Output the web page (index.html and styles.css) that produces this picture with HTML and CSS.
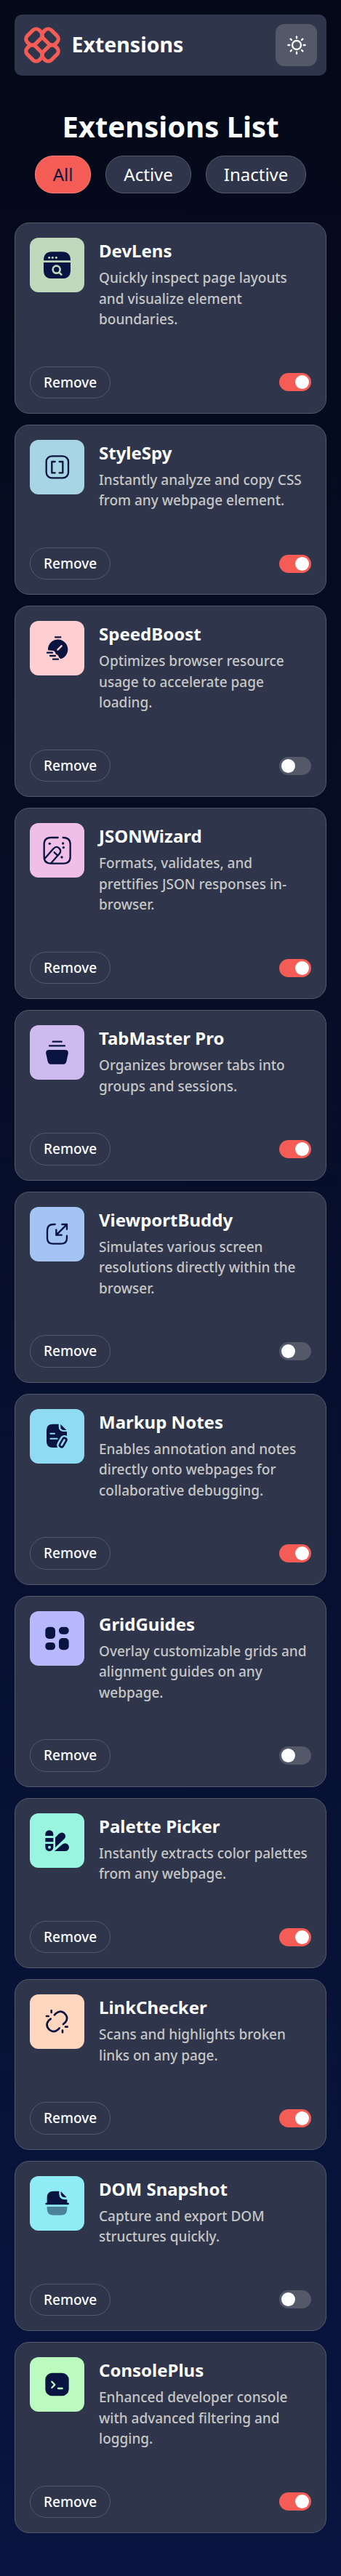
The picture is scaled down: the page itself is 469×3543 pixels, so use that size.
FILE: index.html
```html
<!DOCTYPE html>
<html lang="en">
<head>
<meta charset="utf-8">
<title>Extensions</title>
<link rel="stylesheet" href="styles.css">
</head>
<body>
<header class="header">
  <div class="brand">
    <svg class="brand-mark" viewBox="-75 -75 150 150" fill="none" stroke="#f45c55" stroke-width="16">
      <rect x="-35" y="-23.500" width="70" height="47" rx="19" transform="translate(-33 -33) rotate(-45)"/>
      <rect x="-35" y="-23.500" width="70" height="47" rx="19" transform="translate(33 -33) rotate(45)"/>
      <rect x="-35" y="-23.500" width="70" height="47" rx="19" transform="translate(-33 33) rotate(45)"/>
      <rect x="-35" y="-23.500" width="70" height="47" rx="19" transform="translate(33 33) rotate(-45)"/>
    </svg>
    <span class="brand-name">Extensions</span>
  </div>
  <button class="theme" aria-label="Toggle theme">
    <svg viewBox="-39 -39 78 78" fill="none" stroke="#fbfdfe" stroke-width="7" stroke-linecap="round"><circle r="18"/><path d="M0-35V-29M0 29V35M-35 0H-29M29 0H35M-25-25L-21-21M21 21L25 25M-25 25L-21 21M21-21L25-25"/></svg>
  </button>
</header>
<main>
  <h1>Extensions List</h1>
  <nav class="filters">
    <button class="filter selected">All</button>
    <button class="filter">Active</button>
    <button class="filter">Inactive</button>
  </nav>
  <section class="list">
    <article class="card">
      <div class="info">
        <svg class="tile lens" viewBox="0 0 225 225"><path fill="#091540" d="M57 94Q57 58 91 58H134Q168 58 168 94ZM57 102H168V134Q168 168 134 168H91Q57 168 57 134Z"/><g fill="#c0d8bc"><circle cx="80" cy="82" r="4.500"/><circle cx="94" cy="82" r="4.500"/><circle cx="109" cy="82" r="4.500"/></g><g fill="none" stroke="#c0d8bc" stroke-width="8" stroke-linecap="round"><circle cx="110" cy="131" r="15"/><path d="M121 143L130 152"/></g></svg>
        <div class="copy"><h2>DevLens</h2><p>Quickly inspect page layouts and visualize element boundaries.</p></div>
      </div>
      <div class="actions"><button class="remove">Remove</button><span class="toggle on"></span></div>
    </article>
    <article class="card">
      <div class="info">
        <svg class="tile spy" viewBox="0 0 225 225"><g class="line"><rect x="68" y="67" width="91" height="90" rx="23"/><path d="M104 90H91V136H104M122 90H136V136H122"/></g></svg>
        <div class="copy"><h2>StyleSpy</h2><p>Instantly analyze and copy CSS from any webpage element.</p></div>
      </div>
      <div class="actions"><button class="remove">Remove</button><span class="toggle on"></span></div>
    </article>
    <article class="card">
      <div class="info">
        <svg class="tile speed" viewBox="0 0 225 225"><path fill="#091540" d="M75 121A41 41 0 1 1 128 157Q120 153 119 147Q116 138 108 137Q105 126 98 123Z"/><path class="line" d="M105 67H127M72 131H93M84 144H105M96 158H117"/><path d="M115 119L131 103" fill="none" stroke="#ffced1" stroke-width="7" stroke-linecap="round"/></svg>
        <div class="copy"><h2>SpeedBoost</h2><p>Optimizes browser resource usage to accelerate page loading.</p></div>
      </div>
      <div class="actions"><button class="remove">Remove</button><span class="toggle"></span></div>
    </article>
    <article class="card">
      <div class="info">
        <svg class="tile json" viewBox="0 0 225 225"><path class="line" d="M116 60H87Q59 60 59 88V139Q59 167 87 167H139Q167 167 167 139V88Q167 60 137 60M64 144L98 105Q109 93 121 104Q132 115 122 127L88 165M101 121L114 133"/><g fill="#091540"><circle cx="82" cy="85" r="5"/><circle cx="137" cy="84" r="5"/><circle cx="139" cy="101" r="5"/><circle cx="132" cy="141" r="5"/></g></svg>
        <div class="copy"><h2>JSONWizard</h2><p>Formats, validates, and prettifies JSON responses in-browser.</p></div>
      </div>
      <div class="actions"><button class="remove">Remove</button><span class="toggle on"></span></div>
    </article>
    <article class="card">
      <div class="info">
        <svg class="tile tabs" viewBox="0 0 225 225"><path class="line" d="M95 68H131M81 85H144"/><path fill="#091540" d="M80 102H145Q161 102 158 118L151 150Q148 161 139 161H86Q77 161 74 150L67 118Q64 102 80 102Z"/></svg>
        <div class="copy"><h2>TabMaster Pro</h2><p>Organizes browser tabs into groups and sessions.</p></div>
      </div>
      <div class="actions"><button class="remove">Remove</button><span class="toggle on"></span></div>
    </article>
    <article class="card">
      <div class="info">
        <svg class="tile viewport" viewBox="0 0 225 225"><path class="line" d="M104 72H97Q72 72 72 97V128Q72 152 97 152H128Q153 152 153 128V119M109 116L152 73M133 72H153V92M109 94V116H131"/></svg>
        <div class="copy"><h2>ViewportBuddy</h2><p>Simulates various screen resolutions directly within the browser.</p></div>
      </div>
      <div class="actions"><button class="remove">Remove</button><span class="toggle"></span></div>
    </article>
    <article class="card">
      <div class="info">
        <svg class="tile notes" viewBox="0 0 225 225"><path fill="#091540" d="M95 62H119V72Q119 93 140 93H153V125L130 159H95Q69 159 69 134V87Q69 62 95 62ZM127 63L151 87H143Q127 87 127 74Z"/><path d="M85 101H102M85 122H113" stroke="#8edbf3" stroke-width="6" stroke-linecap="round"/><g fill="#8edbf3" transform="translate(137 138) rotate(30)"><rect x="-8" y="-20" width="16" height="40" rx="8" stroke="#8edbf3" stroke-width="23"/><rect x="-8" y="-20" width="16" height="40" rx="8" stroke="#091540" stroke-width="8"/></g></svg>
        <div class="copy"><h2>Markup Notes</h2><p>Enables annotation and notes directly onto webpages for collaborative debugging.</p></div>
      </div>
      <div class="actions"><button class="remove">Remove</button><span class="toggle on"></span></div>
    </article>
    <article class="card">
      <div class="info">
        <svg class="tile grid" viewBox="0 0 225 225" fill="#091540"><rect x="64" y="65" width="41" height="49" rx="15"/><rect x="120" y="65" width="41" height="30" rx="14"/><rect x="64" y="129" width="41" height="31" rx="14"/><rect x="120" y="111" width="41" height="49" rx="15"/></svg>
        <div class="copy"><h2>GridGuides</h2><p>Overlay customizable grids and alignment guides on any webpage.</p></div>
      </div>
      <div class="actions"><button class="remove">Remove</button><span class="toggle"></span></div>
    </article>
    <article class="card">
      <div class="info">
        <svg class="tile palette" viewBox="0 0 225 225"><path fill="#091540" fill-rule="evenodd" d="M64 93V86A16.500 16.500 0 0 1 97 86V93ZM64 102H97V118H64ZM64 126H97V140A16.500 16.500 0 0 1 64 140ZM75 140A6 6 0 0 0 87 140A6 6 0 0 0 75 140ZM105 141V100L120 85Q132 74 143 84Q152 95 142 106ZM102 156L133 129Q139 124 146 124A16 16 0 0 1 146 156Z"/></svg>
        <div class="copy"><h2>Palette Picker</h2><p>Instantly extracts color palettes from any webpage.</p></div>
      </div>
      <div class="actions"><button class="remove">Remove</button><span class="toggle on"></span></div>
    </article>
    <article class="card">
      <div class="info">
        <svg class="tile link" viewBox="0 0 225 225"><path class="line heavy" d="M102 85L106 80Q124 63 142 77Q162 95 147 115L138 123M122 139L118 144Q100 161 82 147Q62 129 77 109L86 101M89 67V75M69 90H77M135 149V157M147 134H155"/></svg>
        <div class="copy"><h2>LinkChecker</h2><p>Scans and highlights broken links on any page.</p></div>
      </div>
      <div class="actions"><button class="remove">Remove</button><span class="toggle on"></span></div>
    </article>
    <article class="card">
      <div class="info">
        <svg class="tile dom" viewBox="0 0 225 225" fill="#091540"><path d="M71 110V88Q71 62 98 62H121V73Q121 97 145 97H154V110H158A4 4 0 0 1 158 118H68A4 4 0 0 1 68 110ZM128 63L152 88H146Q128 88 128 72Z"/><path opacity=".5" d="M71 126H154V134Q154 161 128 161H98Q71 161 71 134Z"/></svg>
        <div class="copy"><h2>DOM Snapshot</h2><p>Capture and export DOM structures quickly.</p></div>
      </div>
      <div class="actions"><button class="remove">Remove</button><span class="toggle"></span></div>
    </article>
    <article class="card">
      <div class="info">
        <svg class="tile console" viewBox="0 0 225 225"><rect x="64" y="65" width="97" height="95" rx="28" fill="#091540"/><path d="M91 101L103 114L91 126M117 129H134" fill="none" stroke="#bbfbbf" stroke-width="7" stroke-linecap="round" stroke-linejoin="round"/></svg>
        <div class="copy"><h2>ConsolePlus</h2><p>Enhanced developer console with advanced filtering and logging.</p></div>
      </div>
      <div class="actions"><button class="remove">Remove</button><span class="toggle on"></span></div>
    </article>
  </section>
</main>
</body>
</html>
```
FILE: styles.css
```css
* { box-sizing: border-box; margin: 0; padding: 0; }
body {
  min-height: 3543px;
  padding: 20px;
  background: linear-gradient(180deg, #040918 0%, #091540 100%);
  color: #fbfdfe;
  font-family: "Noto Sans", sans-serif;
  line-height: 1.5;
}
button { font: inherit; color: inherit; border: 0; }
.header {
  display: flex;
  align-items: center;
  justify-content: space-between;
  height: 84px;
  padding: 13px;
  border-radius: 10px;
  background: #2f364b;
}
.brand { display: flex; align-items: center; gap: 15.5px; }
.brand-mark { display: block; width: 50px; height: 50px; }
.brand-name { padding-bottom: 2px; font-size: 28.5px; font-weight: 700; line-height: 48px; }
.theme {
  display: grid;
  place-items: center;
  width: 57px;
  height: 58px;
  border-radius: 12px;
  background: #545969;
}
.theme svg { width: 26px; height: 26px; }
h1 { margin-top: 40px; font-size: 40px; font-weight: 700; text-align: center; }
.filters { display: flex; justify-content: center; gap: 20px; margin-top: 10px; }
.filter {
  padding: 7px 24px;
  border: 1px solid #545969;
  border-radius: 25px;
  background: #2f364b;
  font-size: 24px;
}
.filter.selected { background: #f45c55; color: #091540; border-color: #f4807d; }
.list { display: grid; gap: 14.97px; margin-top: 40px; }
.card {
  padding: 20px;
  border: 1px solid #545969;
  border-radius: 20px;
  background: #2f364b;
}
.info { display: flex; gap: 20px; }
.tile { flex: none; width: 75px; height: 75px; border-radius: 12px; }
.line {
  fill: none;
  stroke: #091540;
  stroke-width: 7;
  stroke-linecap: round;
  stroke-linejoin: round;
}
.heavy { stroke-width: 8; }
.lens { background: #c0d8bc; }
.spy { background: #a8d5e3; }
.speed { background: #ffced1; }
.json { background: #efbfe7; }
.tabs { background: #cfbaef; }
.viewport { background: #a4c4f4; }
.notes { background: #8edbf3; }
.grid { background: #b8b8ff; }
.palette { background: #99f5e0; }
.link { background: #ffd7bf; }
.dom { background: #8fecf4; }
.console { background: #bbfbbf; }
h2 { font-size: 24px; font-weight: 700; }
p { margin-top: 5px; color: #c6c6c6; font-size: 19px; font-weight: 500; }
.actions { display: flex; align-items: center; justify-content: space-between; margin-top: 50px; }
.remove {
  padding: 7px 18px;
  border: 1px solid #545969;
  border-radius: 22px;
  background: transparent;
  font-size: 19px;
  font-weight: 500;
}
.toggle {
  display: flex;
  align-items: center;
  width: 44px;
  height: 25px;
  padding: 3px;
  border-radius: 13px;
  background: #545969;
}
.toggle::before { content: ""; width: 19px; height: 19px; border-radius: 50%; background: #fbfdfe; }
.toggle.on { justify-content: flex-end; background: #f45c55; }
```
